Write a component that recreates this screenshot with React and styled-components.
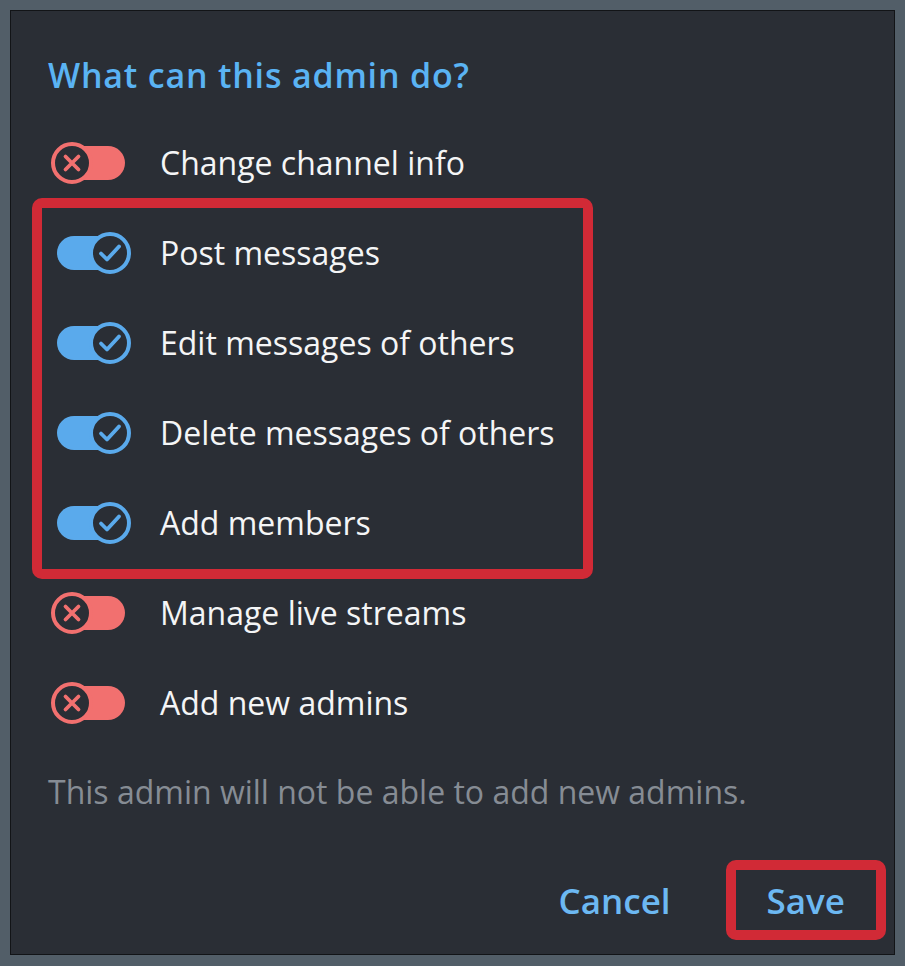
import React from "react";
import styled, { createGlobalStyle } from "styled-components";

const Global = createGlobalStyle`
  html, body { margin: 0; padding: 0; background: #525e68; }
  body { font-family: "Open Sans", "Noto Sans", sans-serif; }
  * { box-sizing: border-box; }
`;

const Page = styled.div`
  width: 905px;
  height: 966px;
  padding: 10px;
  background: #525e68;
`;

const Dialog = styled.div`
  width: 885px;
  height: 945px;
  background: #2a2e35;
  border: 1px solid #121417;
  padding: 44px 18px 0 37px;
  display: flex;
  flex-direction: column;
`;

const Title = styled.h2`
  margin: 0;
  font-size: 34px;
  line-height: 40px;
  font-weight: 600;
  letter-spacing: 0.8px;
  color: #5ab3f3;
`;

const List = styled.div`
  margin-top: 23px;
  display: flex;
  flex-direction: column;
`;

const Group = styled.div`
  position: relative;
  display: flex;
  flex-direction: column;
`;

const Highlight = styled.div`
  position: absolute;
  top: -10px;
  bottom: -11px;
  left: -16px;
  width: 561px;
  border: 10px solid #d12a36;
  border-radius: 10px;
  pointer-events: none;
`;

const Row = styled.div`
  height: 90px;
  display: flex;
  align-items: center;
  padding-left: 3px;
`;

const Label = styled.span`
  margin-left: 29px;
  font-size: 32px;
  color: #f4f5f6;
  line-height: 40px;
`;

const Toggle = styled.div`
  position: relative;
  width: 80px;
  height: 46px;
  flex: none;
`;

const Track = styled.div`
  position: absolute;
  left: 6px;
  right: 6px;
  top: 6px;
  height: 34px;
  border-radius: 17px;
  background: ${(p) => (p.$on ? "#5aaaec" : "#f2706f")};
`;

const Knob = styled.div`
  position: absolute;
  top: 2px;
  ${(p) => (p.$on ? "right: 0;" : "left: 0;")}
  width: 42px;
  height: 42px;
  border-radius: 50%;
  background: #2a2e35;
  border: 4px solid ${(p) => (p.$on ? "#5aaaec" : "#f2706f")};
  display: flex;
  align-items: center;
  justify-content: center;
`;

const Hint = styled.p`
  margin: 24px 0 0;
  font-size: 32px;
  line-height: 40px;
  color: #868c94;
`;

const Buttons = styled.div`
  margin-top: 58px;
  display: flex;
  justify-content: flex-end;
  gap: 34px;
`;

const Button = styled.div`
  position: relative;
  height: 60px;
  padding: 0 31px;
  display: flex;
  align-items: center;
  font-size: 35px;
  font-weight: 600;
  color: #6cb8f2;
`;

const ButtonHighlight = styled.div`
  position: absolute;
  inset: -10px;
  border: 10px solid #d12a36;
  border-radius: 10px;
  pointer-events: none;
`;

function Switch({ on }) {
  return (
    <Toggle>
      <Track $on={on} />
      <Knob $on={on}>
        {on ? (
          <svg width="24" height="20" viewBox="0 0 24 20">
            <path d="M3 10.5 L9 16.5 L21 3.5" fill="none" stroke="#5aaaec" strokeWidth="3.8" strokeLinecap="round" strokeLinejoin="round" />
          </svg>
        ) : (
          <svg width="20" height="20" viewBox="0 0 20 20">
            <path d="M3.5 3.5 L16.5 16.5 M16.5 3.5 L3.5 16.5" fill="none" stroke="#f2706f" strokeWidth="3.8" strokeLinecap="round" />
          </svg>
        )}
      </Knob>
    </Toggle>
  );
}

function Item({ on, label }) {
  return (
    <Row>
      <Switch on={on} />
      <Label>{label}</Label>
    </Row>
  );
}

export default function App() {
  return (
    <Page>
      <Global />
      <Dialog>
        <Title>What can this admin do?</Title>
        <List>
          <Item on={false} label="Change channel info" />
          <Group>
            <Item on label="Post messages" />
            <Item on label="Edit messages of others" />
            <Item on label="Delete messages of others" />
            <Item on label="Add members" />
            <Highlight />
          </Group>
          <Item on={false} label="Manage live streams" />
          <Item on={false} label="Add new admins" />
        </List>
        <Hint>This admin will not be able to add new admins.</Hint>
        <Buttons>
          <Button>Cancel</Button>
          <Button>
            Save
            <ButtonHighlight />
          </Button>
        </Buttons>
      </Dialog>
    </Page>
  );
}
